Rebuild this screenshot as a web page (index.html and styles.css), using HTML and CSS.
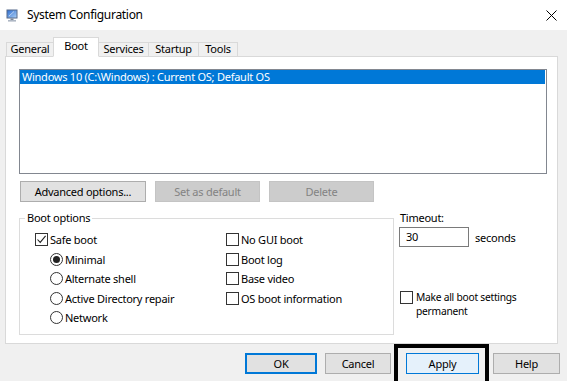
FILE: index.html
```html
<!DOCTYPE html>
<html lang="en">
<head>
<meta charset="utf-8">
<title>System Configuration</title>
<link rel="stylesheet" href="styles.css">
</head>
<body>
<div class="window">
  <div class="titlebar">
    <svg class="app-icon" viewBox="0 0 12 13" aria-hidden="true">
      <defs>
        <linearGradient id="scr" x1="0" y1="0" x2="1" y2="1">
          <stop offset="0" stop-color="#2f6fd0"/>
          <stop offset="1" stop-color="#a9cdf5"/>
        </linearGradient>
      </defs>
      <rect x="0.5" y="0.5" width="11" height="9" fill="#55698a"/>
      <rect x="1.5" y="1.5" width="9" height="7" fill="url(#scr)"/>
      <path d="M3 7 L8 2.5" stroke="#ffffff" stroke-width="0.8" opacity="0.7"/>
      <rect x="4.5" y="9.5" width="3" height="1.5" fill="#7d8898"/>
      <rect x="2" y="11" width="8" height="1.6" fill="#aeb7c4"/>
    </svg>
    <span class="title">System Configuration</span>
    <svg class="close" viewBox="0 0 11 11" aria-hidden="true">
      <path d="M0.5 0.5 L10.5 10.5 M10.5 0.5 L0.5 10.5" stroke="#000" stroke-width="1"/>
    </svg>
  </div>

  <div class="tabs">
    <div class="tab tab-general">General</div>
    <div class="tab tab-boot active">Boot</div>
    <div class="tab tab-services">Services</div>
    <div class="tab tab-startup">Startup</div>
    <div class="tab tab-tools">Tools</div>
  </div>

  <div class="panel">
    <div class="listbox">
      <div class="list-item selected">Windows 10 (C:\Windows) : Current OS; Default OS</div>
    </div>

    <div class="list-buttons">
      <button class="btn btn-adv">Advanced options...</button>
      <button class="btn btn-wide" disabled>Set as default</button>
      <button class="btn btn-wide" disabled>Delete</button>
    </div>

    <div class="options">
      <fieldset class="group">
        <legend>Boot options</legend>
        <div class="group-body">
          <div class="col-left">
            <div class="opt"><span class="check"><svg viewBox="0 0 11 11"><path d="M1.5 5.5 L4.2 8.4 L9.6 1.8" fill="none" stroke="#222" stroke-width="1.1"/></svg></span>Safe boot</div>
            <div class="opt sub"><span class="radio on"></span>Minimal</div>
            <div class="opt sub"><span class="radio"></span>Alternate shell</div>
            <div class="opt sub"><span class="radio"></span>Active Directory repair</div>
            <div class="opt sub"><span class="radio"></span>Network</div>
          </div>
          <div class="col-right">
            <div class="opt"><span class="check"></span>No GUI boot</div>
            <div class="opt"><span class="check"></span>Boot log</div>
            <div class="opt"><span class="check"></span>Base video</div>
            <div class="opt"><span class="check"></span>OS boot information</div>
          </div>
        </div>
      </fieldset>

      <div class="side">
        <div class="timeout-label">Timeout:</div>
        <div class="timeout-row">
          <div class="input">30</div>
          <span class="seconds">seconds</span>
        </div>
        <div class="perm"><span class="check"></span><span class="perm-text">Make all boot settings<br>permanent</span></div>
      </div>
    </div>
  </div>

  <div class="footer">
    <button class="btn fbtn ok">OK</button>
    <button class="btn fbtn cancel">Cancel</button>
    <span class="apply-wrap"><button class="btn fbtn apply">Apply</button></span>
    <button class="btn fbtn help">Help</button>
  </div>
</div>
</body>
</html>
```

FILE: styles.css
```css
* {
  box-sizing: border-box;
}

html,
body {
  margin: 0;
  padding: 0;
}

body {
  width: 567px;
  height: 381px;
  overflow: hidden;
  background: #f0f0f0;
  font-family: "Noto Sans", "Segoe UI", sans-serif;
  font-size: 11px;
  letter-spacing: -0.25px;
  color: #000;
}

.window {
  width: 567px;
  height: 381px;
  display: flex;
  flex-direction: column;
  background: #f0f0f0;
  overflow: hidden;
}

/* Title bar */
.titlebar {
  flex: none;
  height: 30px;
  background: #fff;
  display: flex;
  align-items: center;
  padding: 0 10px 0 6px;
}

.app-icon {
  width: 12px;
  height: 13px;
  margin-right: 9px;
  margin-top: 1px;
}

.title {
  flex: 1;
  font-size: 12px;
  letter-spacing: -0.3px;
  line-height: 16px;
}

.close {
  width: 11px;
  height: 11px;
}

/* Tabs */
.tabs {
  flex: none;
  height: 27px;
  margin-bottom: -1px;
  padding-left: 6px;
  display: flex;
  align-items: flex-end;
  position: relative;
  z-index: 1;
}

.tab {
  height: 15px;
  line-height: 12px;
  border: 1px solid #d9d9d9;
  background: #f0f0f0;
  text-align: center;
  margin-left: -1px;
  white-space: nowrap;
}

.tab-general {
  margin-left: 0;
  width: 48px;
}

.tab-boot {
  width: 46px;
}

.tab-services {
  width: 51px;
}

.tab-startup {
  width: 51px;
}

.tab-tools {
  width: 40px;
}

.tab.active {
  height: 20px;
  line-height: 15px;
  background: #fff;
  border-bottom-color: #fff;
  position: relative;
  z-index: 2;
}

/* Main panel */
.panel {
  flex: none;
  margin-left: 5px;
  width: 553px;
  height: 288px;
  border: 1px solid #d9d9d9;
  background: #fff;
  padding: 12px 0 0 13px;
}

.listbox {
  width: 528px;
  height: 105px;
  border: 1px solid #828790;
  background: #fff;
}

.list-item {
  height: 14px;
  line-height: 14px;
  padding-left: 2px;
  white-space: nowrap;
}

.list-item.selected {
  margin-right: 1px;
  background: #0078d7;
  color: #fff;
}

.list-buttons {
  display: flex;
  gap: 9px;
  margin: 7px 0 0 1px;
}

.btn {
  height: 21px;
  padding: 0;
  font: inherit;
  letter-spacing: inherit;
  line-height: 19px;
  color: #000;
  background: #e1e1e1;
  border: 1px solid #adadad;
  border-radius: 0;
}

.btn:disabled {
  background: #cccccc;
  border-color: #c4c4c4;
  color: #838383;
}

.btn-adv {
  width: 126px;
}

.btn-wide {
  width: 105px;
}

/* Options area */
.options {
  display: flex;
  margin-top: 9px;
}

.group {
  margin: 0;
  padding: 0;
  width: 375px;
  height: 124px;
  min-width: 0;
  border: 1px solid #dcdcdc;
}

.group legend {
  margin-left: 5px;
  padding: 0 2px;
  line-height: 14px;
}

.group-body {
  display: flex;
  padding: 5px 0 0 15px;
}

.col-left {
  width: 191px;
}

.opt {
  display: flex;
  align-items: center;
  height: 19.5px;
  white-space: nowrap;
}

.opt.sub {
  padding-left: 15px;
}

.check {
  flex: none;
  width: 13px;
  height: 13px;
  margin-right: 2px;
  border: 1px solid #333;
  background: #fff;
  display: flex;
}

.check svg {
  width: 11px;
  height: 11px;
}

.radio {
  flex: none;
  width: 13px;
  height: 13px;
  margin-right: 2px;
  border: 1px solid #333;
  border-radius: 50%;
  background: #fff;
  display: flex;
  align-items: center;
  justify-content: center;
}

.radio.on::after {
  content: "";
  width: 7px;
  height: 7px;
  border-radius: 50%;
  background: #222;
}

.side {
  margin-left: 5px;
}

.timeout-label {
  line-height: 14px;
  padding-left: 1px;
}

.timeout-row {
  display: flex;
  align-items: center;
  margin-top: 2px;
}

.input {
  width: 70px;
  height: 20px;
  border: 1px solid #7a7a7a;
  background: #fff;
  padding-left: 6px;
  line-height: 18px;
}

.seconds {
  margin-left: 6px;
}

.perm {
  display: flex;
  align-items: flex-start;
  margin: 44px 0 0 1px;
}

.perm .check {
  margin-right: 3px;
}

.perm-text {
  font-size: 10.25px;
  line-height: 14px;
  margin-top: -1px;
}

/* Footer buttons */
.footer {
  flex: none;
  display: flex;
  padding: 9px 0 0 245px;
}

.fbtn {
  line-height: 19px;
}

.ok {
  width: 72px;
  border: 2px solid #0078d7;
  line-height: 17px;
}

.cancel {
  width: 66px;
  margin-left: 8px;
}

.apply-wrap {
  position: relative;
  display: flex;
  margin-left: 15px;
}

.apply-wrap::after {
  content: "";
  position: absolute;
  left: -12px;
  right: -10px;
  top: -9px;
  bottom: -13px;
  border: 4px solid #000;
  pointer-events: none;
}

.apply {
  width: 73px;
  background: #e5f1fb;
  border-color: #0078d7;
}

.help {
  width: 67px;
  margin-left: 14px;
}
```
